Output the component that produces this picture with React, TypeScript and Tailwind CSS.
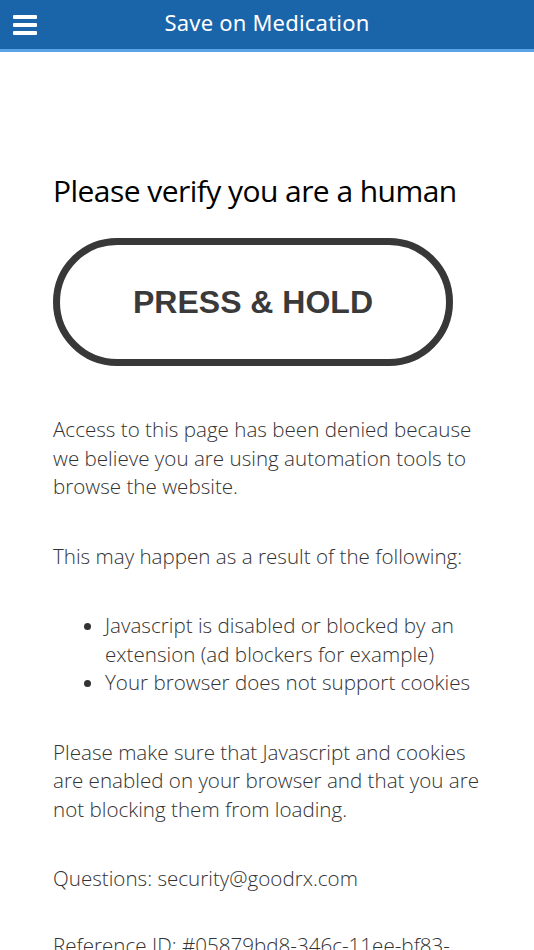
export default function App() {
  return (
    <div className="min-h-[950px] w-full overflow-hidden bg-white">
      <header className="flex h-[49px] items-center bg-[#1a64aa] border-b-[3px] border-[#5aa3e6] box-content">
        <button type="button" className="ml-[13px] flex w-[24px] flex-col gap-[4px]" aria-label="Menu">
          <span className="block h-[4px] w-full rounded-[1px] bg-white" />
          <span className="block h-[4px] w-full rounded-[1px] bg-white" />
          <span className="block h-[4px] w-full rounded-[1px] bg-white" />
        </button>
        <h1 className="-mt-[4px] flex-1 pr-[37px] text-center font-['Noto_Sans',sans-serif] text-[22px] tracking-[0.2px] text-white">
          Save on Medication
        </h1>
      </header>

      <main className="ml-[53px] w-[432px] pt-[119px] font-['Open_Sans',sans-serif] text-[#333]">
        <h2 className="text-[30px] leading-[40px] tracking-[-0.55px] text-black">
          Please verify you are a human
        </h2>

        <button
          type="button"
          className="mt-[27px] flex h-[128px] w-[400px] items-center justify-center rounded-full border-[7px] border-[#383838] bg-white font-['Liberation_Sans',Arial,sans-serif] text-[32px] font-bold text-[#3a3a3a]"
        >
          PRESS &amp; HOLD
        </button>

        <div className="mt-[49px] text-[20.6px] font-light leading-[28.5px]">
          <p>
            Access to this page has been denied because we believe you are
            using automation tools to browse the website.
          </p>
          <p className="mt-[41px]">This may happen as a result of the following:</p>
          <ul className="mt-[41px] list-disc pl-[52px]">
            <li>Javascript is disabled or blocked by an extension (ad blockers for example)</li>
            <li>Your browser does not support cookies</li>
          </ul>
          <p className="mt-[41px]">
            Please make sure that Javascript and cookies are enabled on your
            browser and that you are not blocking them from loading.
          </p>
          <p className="mt-[41px]">Questions: security@goodrx.com</p>
          <p className="mt-[38px]">Reference ID: #05879bd8-346c-11ee-bf83-6e4c6a4b5354</p>
        </div>
      </main>
    </div>
  );
}
